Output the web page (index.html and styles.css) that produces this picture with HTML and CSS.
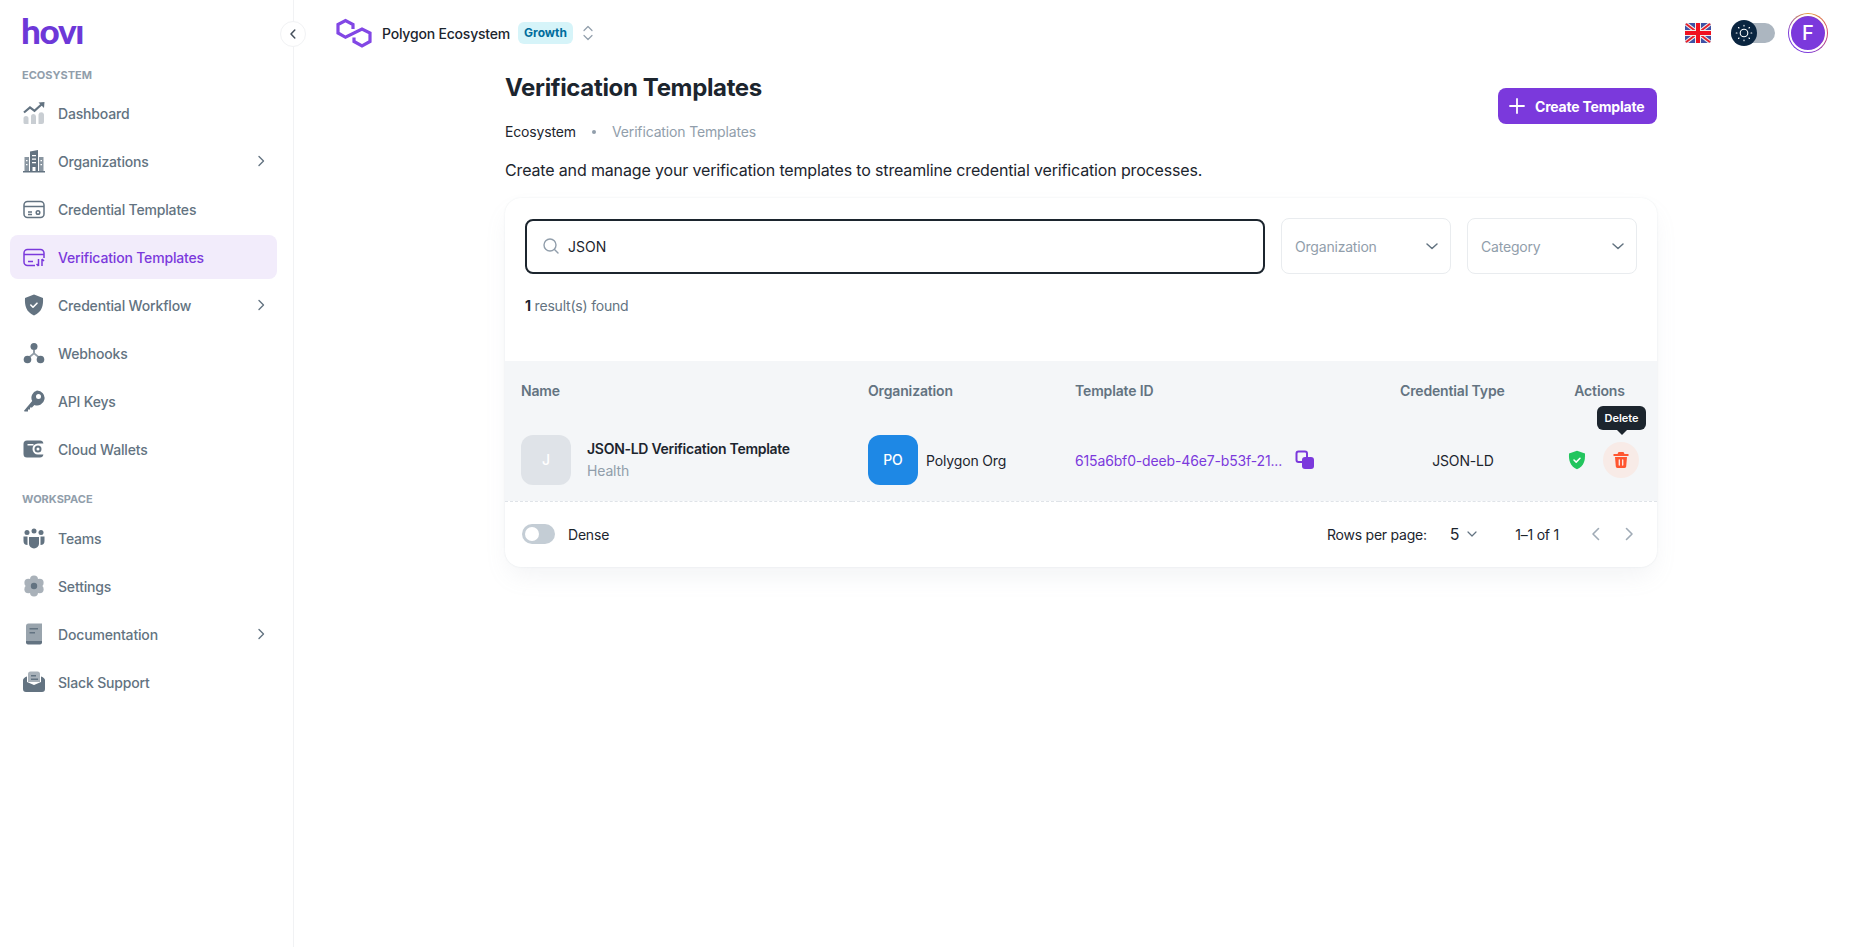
FILE: index.html
```html
<!doctype html>
<html lang="en">
  <head>
    <meta charset="UTF-8" />
    <meta name="viewport" content="width=device-width, initial-scale=1.0" />
    <title>Verification Templates</title>
    <link rel="stylesheet" href="styles.css">
  </head>
  <body>
    <aside class="sidebar">
      <div class="logo">hovı</div>
      <button class="collapse">
        <svg width="14" height="14" viewBox="0 0 14 14"><path d="M8.8 3 5 7l3.8 4" fill="none" stroke="#454f5b" stroke-width="1.5" stroke-linecap="round" stroke-linejoin="round"/></svg>
      </button>

      <div class="nav-title first">ECOSYSTEM</div>
      <nav class="nav">
        <a class="nav-item">
          <svg class="nav-icon" viewBox="0 0 24 24"><g fill="#637381"><path opacity=".35" d="M1.500 17.500a2.500 2.500 0 0 1 5 0V23H3a1.500 1.500 0 0 1-1.500-1.500zM9 15.500a2.500 2.500 0 0 1 5 0V23H9zM16.500 13.500a2.800 2.800 0 0 1 5.500 0V21a2 2 0 0 1-2 2h-3.500z"/><path d="m16.500 1.500 6-.5-.5 6z"/></g><path d="M2 11.500 8 6.300l4.500 3.500L20 3" fill="none" stroke="#637381" stroke-width="2.200"/></svg>
          <span class="nav-label">Dashboard</span>
        </a>
        <a class="nav-item">
          <svg class="nav-icon" viewBox="0 0 24 24"><g fill="#637381"><path d="M1 22h22v1.500H1z"/><path d="M8 2.500 16 1v21H8z"/><path d="M2.500 8H7v14H2.500zM17 8h4.500v14H17z" opacity=".75"/><path fill="#fff" d="M10 6h4v1.300h-4zM10 9.500h4v1.300h-4zM10 13h4v1.300h-4zM10.500 18h3v4h-3zM4 11h1.500v1.300H4zM4 15h1.500v1.300H4zM18.500 11H20v1.300h-1.500zM18.500 15H20v1.300h-1.500z"/></g></svg>
          <span class="nav-label">Organizations</span>
          <svg class="nav-arrow" viewBox="0 0 14 14"><path d="M5 2.500 9.500 7 5 11.500" /></svg>
        </a>
        <a class="nav-item">
          <svg class="nav-icon" viewBox="0 0 24 24"><g fill="none" stroke="#637381" stroke-width="1.500"><rect x="2" y="4.500" width="20" height="16" rx="3.500"/><path d="M2 9.500h20M6 15h4M6 17.500h4" /><circle cx="16" cy="15.500" r="1.800"/></g></svg>
          <span class="nav-label">Credential Templates</span>
        </a>
        <a class="nav-item active">
          <svg class="nav-icon" viewBox="0 0 24 24"><g fill="none" stroke="#7b39dc" stroke-width="1.500"><path d="M13 20.500H5.500A3.500 3.500 0 0 1 2 17V8a3.500 3.500 0 0 1 3.500-3.500h13A3.500 3.500 0 0 1 22 8v5"/><path d="M2 9.500h20M6 16.500h5M16.500 14v7M14.500 19l2 2M20 21v-7M22 16l-2-2"/></g></svg>
          <span class="nav-label">Verification Templates</span>
        </a>
        <a class="nav-item">
          <svg class="nav-icon" viewBox="0 0 24 24"><path fill="#637381" d="M12 1.500 21 5c.4 7.500-1 14-9 17.500C4 19 2.600 12.500 3 5z"/><path d="m8.800 12 2.200 2.200 4-4" fill="none" stroke="#fff" stroke-width="1.600" stroke-linecap="round" stroke-linejoin="round"/></svg>
          <span class="nav-label">Credential Workflow</span>
          <svg class="nav-arrow" viewBox="0 0 14 14"><path d="M5 2.500 9.500 7 5 11.500" /></svg>
        </a>
        <a class="nav-item">
          <svg class="nav-icon" viewBox="0 0 24 24"><g fill="#637381"><circle cx="12" cy="5.500" r="3.500"/><circle cx="5.500" cy="18.500" r="3.800"/><circle cx="18.500" cy="18.500" r="3.800"/><path d="M11 9h2v3l5 4-1 1.500-5-4-5 4L6 16l5-4z" opacity=".7"/></g></svg>
          <span class="nav-label">Webhooks</span>
        </a>
        <a class="nav-item">
          <svg class="nav-icon" viewBox="0 0 24 24"><path fill="#637381" fill-rule="evenodd" d="M15 1.500a7.500 7.500 0 1 1-2.600 14.500L10 18.400H8v2H6v2H2.500L2 21.800l8.200-9.700A7.500 7.500 0 0 1 15 1.500zm1.500 3.500a2.500 2.500 0 1 0 0 5 2.500 2.500 0 0 0 0-5z"/></svg>
          <span class="nav-label">API Keys</span>
        </a>
        <a class="nav-item">
          <svg class="nav-icon" viewBox="0 0 24 24"><path fill="#637381" fill-rule="evenodd" d="M5 3.500h13a3.500 3.500 0 0 1 3.400 3H16a5.500 5.500 0 0 0 0 11h5.400a3.500 3.500 0 0 1-3.400 3H5a3.500 3.500 0 0 1-3.500-3.500V7A3.500 3.500 0 0 1 5 3.500zM5.500 7v1.500h6V7zM16 8.500a3.500 3.500 0 1 1 0 7 3.500 3.500 0 0 1 0-7zm0 2a1.500 1.500 0 1 0 0 3 1.500 1.500 0 0 0 0-3z"/></svg>
          <span class="nav-label">Cloud Wallets</span>
        </a>
      </nav>

      <div class="nav-title workspace">WORKSPACE</div>
      <nav class="nav">
        <a class="nav-item">
          <svg class="nav-icon" viewBox="0 0 24 24"><g fill="#637381"><circle cx="5" cy="6.500" r="2.500"/><circle cx="12" cy="5" r="2.500"/><circle cx="19" cy="6.500" r="2.500"/><path d="M7 11h10v6.500a5 5 0 0 1-10 0z"/><path d="M1.500 10.500H5.500V19A4 4 0 0 1 1.500 15zM22.500 10.500H18.500V19a4 4 0 0 0 4-4z"/></g></svg>
          <span class="nav-label">Teams</span>
        </a>
        <a class="nav-item">
          <svg class="nav-icon" viewBox="0 0 24 24"><g fill="#637381" opacity=".55"><circle cx="12" cy="12" r="7.500"/><circle cx="12" cy="5.500" r="4"/><circle cx="12" cy="18.500" r="4"/><circle cx="6.400" cy="8.700" r="4"/><circle cx="17.600" cy="8.700" r="4"/><circle cx="6.400" cy="15.300" r="4"/><circle cx="17.600" cy="15.300" r="4"/></g><circle cx="12" cy="12" r="3.200" fill="#637381"/></svg>
          <span class="nav-label">Settings</span>
        </a>
        <a class="nav-item">
          <svg class="nav-icon" viewBox="0 0 24 24"><g fill="#637381"><path opacity=".65" d="M4 4a2.500 2.500 0 0 1 2.500-2.500H20V19H4z"/><path d="M4 19h16v1.500a2 2 0 0 1-2 2H6a2 2 0 0 1-2-2z"/><path d="M7.500 6H16v1.600H7.500zM7.500 10H13v1.600H7.500z"/></g></svg>
          <span class="nav-label">Documentation</span>
          <svg class="nav-arrow" viewBox="0 0 14 14"><path d="M5 2.500 9.500 7 5 11.500" /></svg>
        </a>
        <a class="nav-item">
          <svg class="nav-icon" viewBox="0 0 24 24"><g fill="#637381"><path opacity=".55" d="M6 4a2.500 2.500 0 0 1 2.500-2.500h7A2.500 2.500 0 0 1 18 4v8H6z"/><path d="M1 10c0-1.500 2-3 4-3.500V12l7 3 7-3V6.500c2 .5 4 2 4 3.500v9a3 3 0 0 1-3 3H4a3 3 0 0 1-3-3z"/><path d="M9 5h5v1.500H9zM9 8.500h7V10H9z"/></g></svg>
          <span class="nav-label">Slack Support</span>
        </a>
      </nav>
    </aside>

    <div class="page">
      <header class="topbar">
        <div class="workspace-switch">
          <svg class="polygon" width="40" height="32" viewBox="5 7 40 32"><path d="M23 19v-4.500l-7.500-4-7.500 4V23l7.500 4.300L32 19l8 4v8.500L32 36l-8-4.500v-4" fill="none" stroke="#8247e5" stroke-width="3.200"/></svg>
          <span class="workspace-name">Polygon Ecosystem</span>
          <span class="plan">Growth</span>
          <svg width="14" height="18" viewBox="0 0 14 18"><path d="M3 6.500 7 2.500l4 4M3 11.500l4 4 4-4" fill="none" stroke="#919eab" stroke-width="1.200" stroke-linecap="round" stroke-linejoin="round"/></svg>
        </div>
        <div class="topbar-right">
          <svg class="flag" width="26" height="20" viewBox="0 0 26 20">
            <rect width="26" height="20" fill="#3f51a5"/>
            <path d="M0 0 26 20M26 0 0 20" stroke="#eee" stroke-width="4"/>
            <path d="M0 0 26 20M26 0 0 20" stroke="#e8202c" stroke-width="1.800"/>
            <path d="M10 0h6v20h-6zM0 7h26v6H0z" fill="#eee"/>
            <path d="M11 0h4v20h-4zM0 8h26v4H0z" fill="#f01020"/>
          </svg>
          <div class="theme-toggle">
            <span class="theme-knob">
              <svg width="18" height="18" viewBox="0 0 18 18"><g fill="none" stroke="#fff" stroke-width="1.100" stroke-linecap="round"><circle cx="9" cy="9" r="3.800"/><path d="M9 1.200v.8M9 16v.8M1.200 9H2M16 9h.8M3.500 3.500l.5.5M14 14l.5.5M3.500 14.500 4 14M14 4l.5-.5"/></g></svg>
            </span>
          </div>
          <div class="avatar-ring"><div class="avatar">F</div></div>
        </div>
      </header>

      <main class="content">
        <div class="page-head">
          <div>
            <h1>Verification Templates</h1>
            <div class="breadcrumb">
              <span>Ecosystem</span>
              <i class="dot"></i>
              <span class="muted">Verification Templates</span>
            </div>
          </div>
          <button class="btn-create">
            <svg width="20" height="20" viewBox="0 0 20 20"><path d="M10 3v14M3 10h14" stroke="#fff" stroke-width="1.800" stroke-linecap="round"/></svg>
            Create Template
          </button>
        </div>
        <p class="intro">Create and manage your verification templates to streamline credential verification processes.</p>

        <section class="card">
          <div class="filters">
            <div class="search">
              <svg width="20" height="20" viewBox="0 0 20 20"><circle cx="9" cy="9" r="6" fill="none" stroke="#919eab" stroke-width="1.400"/><path d="m13.500 13.500 3.500 3.500" stroke="#919eab" stroke-width="1.400" stroke-linecap="round"/></svg>
              <span>JSON</span>
            </div>
            <div class="select">
              <span>Organization</span>
              <svg width="16" height="16" viewBox="0 0 16 16"><path d="m3 6 5 4.500L13 6" fill="none" stroke="#637381" stroke-width="1.500" stroke-linecap="round" stroke-linejoin="round"/></svg>
            </div>
            <div class="select">
              <span>Category</span>
              <svg width="16" height="16" viewBox="0 0 16 16"><path d="m3 6 5 4.500L13 6" fill="none" stroke="#637381" stroke-width="1.500" stroke-linecap="round" stroke-linejoin="round"/></svg>
            </div>
          </div>
          <div class="results"><b>1</b> result(s) found</div>

          <table class="table">
            <colgroup>
              <col class="col-name"><col class="col-org"><col class="col-id"><col class="col-type"><col>
            </colgroup>
            <thead>
              <tr>
                <th>Name</th>
                <th>Organization</th>
                <th>Template ID</th>
                <th class="center">Credential Type</th>
                <th class="center th-actions">Actions</th>
              </tr>
            </thead>
            <tbody>
              <tr>
                <td>
                  <div class="cell-name">
                    <div class="thumb thumb-grey">J</div>
                    <div>
                      <div class="tpl-name">JSON-LD Verification Template</div>
                      <div class="tpl-cat">Health</div>
                    </div>
                  </div>
                </td>
                <td>
                  <div class="cell-org">
                    <div class="thumb thumb-blue">PO</div>
                    <span>Polygon Org</span>
                  </div>
                </td>
                <td>
                  <div class="cell-id">
                    <span class="tpl-id">615a6bf0-deeb-46e7-b53f-21...</span>
                    <svg width="20" height="20" viewBox="0 0 20 20"><rect x="1.500" y="1.500" width="10.500" height="10.500" rx="2" fill="none" stroke="#7b39dc" stroke-width="2"/><rect x="7" y="7" width="12" height="12" rx="3" fill="#7b39dc"/></svg>
                  </div>
                </td>
                <td class="center td-type">JSON-LD</td>
                <td class="td-actions">
                  <div class="actions">
                    <svg width="18" height="20" viewBox="0 0 18 20"><path fill="#22c55e" d="M9 .8 17 3.500c.3 7-.9 12.500-8 15.800C1.900 16 .7 10.500 1 3.500z"/><path d="m6 10 2.200 2.100L12 8.300" fill="none" stroke="#fff" stroke-width="1.500" stroke-linecap="round" stroke-linejoin="round"/></svg>
                    <span class="delete">
                      <svg width="18" height="18" viewBox="0 0 18 18"><path fill="#ff5630" d="M6.500 1h5l1 2h4v2h-15V3h4zM3 6h12l-.8 9.500A2 2 0 0 1 12.200 17H5.800a2 2 0 0 1-2-1.500z"/><path d="M7.300 9v5M10.700 9v5" stroke="#fbeeeb" stroke-width="1.300" stroke-linecap="round"/></svg>
                      <span class="tooltip">Delete</span>
                    </span>
                  </div>
                </td>
              </tr>
            </tbody>
          </table>

          <div class="table-foot">
            <div class="dense">
              <span class="switch"><i></i></span>
              <span>Dense</span>
            </div>
            <div class="pager">
              <span>Rows per page:</span>
              <span class="rows">5
                <svg width="14" height="14" viewBox="0 0 14 14"><path d="m3 5 4 4 4-4" fill="none" stroke="#637381" stroke-width="1.200" stroke-linecap="round" stroke-linejoin="round"/></svg>
              </span>
              <span class="range">1–1 of 1</span>
              <svg class="page-arrow" width="16" height="16" viewBox="0 0 16 16"><path d="M10.500 2.500 5 8l5.500 5.500"/></svg>
              <svg class="page-arrow" width="16" height="16" viewBox="0 0 16 16"><path d="M5.500 2.500 11 8l-5.500 5.500"/></svg>
            </div>
          </div>
        </section>
      </main>
    </div>
  </body>
</html>
```

FILE: styles.css
```css
* {
  box-sizing: border-box;
  margin: 0;
  padding: 0;
}

html,
body {
  height: 100%;
}

body {
  display: flex;
  font-family: Inter, "Liberation Sans", sans-serif;
  font-size: 14px;
  color: #1c252e;
  background-color: #fff;
  overflow: hidden;
}

/* sidebar */
.sidebar {
  position: relative;
  flex: 0 0 294px;
  height: 100%;
  padding: 0 16px 0 10px;
  border-right: 1px solid #f1f2f4;
}

.logo {
  height: 62px;
  padding: 10px 0 0 11px;
  font-family: Lato, sans-serif;
  font-size: 35px;
  font-weight: 900;
  line-height: 40px;
  letter-spacing: -1.3px;
  color: #6d38d8;
}

.collapse {
  position: absolute;
  top: 21px;
  right: -13px;
  display: flex;
  align-items: center;
  justify-content: center;
  width: 26px;
  height: 26px;
  border: 1px solid #f1f2f4;
  border-radius: 50%;
  background-color: #fff;
}

.nav-title {
  height: 26px;
  padding-left: 12px;
  font-size: 11px;
  font-weight: 700;
  line-height: 26px;
  color: #919eab;
}

.first {
  margin-bottom: 3px;
}

.workspace {
  margin-top: 15px;
  margin-bottom: 4px;
}

.nav {
  display: flex;
  flex-direction: column;
  gap: 4px;
}

.nav-item {
  display: flex;
  align-items: center;
  height: 44px;
  padding: 0 9px 0 12px;
  border-radius: 8px;
  font-size: 14px;
  font-weight: 500;
  letter-spacing: -0.17px;
  color: #637381;
}

.nav-item.active {
  background-color: #f2ecfb;
  color: #7b39dc;
}

.nav-icon {
  flex: none;
  width: 24px;
  height: 24px;
  margin-right: 12px;
}

.nav-label {
  flex: 1;
}

.nav-arrow {
  flex: none;
  width: 14px;
  height: 14px;
  fill: none;
  stroke: #637381;
  stroke-width: 1.400;
  stroke-linecap: round;
  stroke-linejoin: round;
}

/* topbar */
.page {
  flex: 1;
  min-width: 0;
}

.topbar {
  display: flex;
  align-items: center;
  justify-content: space-between;
  height: 66px;
  padding: 0 38px 0 41px;
}

.workspace-switch {
  display: flex;
  align-items: center;
}

.polygon {
  margin-right: 7px;
}

.workspace-name {
  font-weight: 500;
  letter-spacing: -0.2px;
  margin-right: 8px;
}

.plan {
  height: 22px;
  padding: 0 6px;
  margin-right: 8px;
  border-radius: 6px;
  background-color: #d6f4f9;
  color: #006c9c;
  font-size: 12px;
  font-weight: 700;
  line-height: 22px;
}

.topbar-right {
  display: flex;
  align-items: center;
}

.flag {
  margin-right: 20px;
  border-radius: 3px;
}

.theme-toggle {
  position: relative;
  width: 44px;
  height: 20px;
  margin-right: 13px;
  border-radius: 10px;
  background-color: #acb6c0;
}

.theme-knob {
  position: absolute;
  top: -3px;
  left: 0;
  display: flex;
  align-items: center;
  justify-content: center;
  width: 26px;
  height: 26px;
  border-radius: 50%;
  background-color: #0a2540;
}

.avatar-ring {
  display: flex;
  align-items: center;
  justify-content: center;
  width: 40px;
  height: 40px;
  border-radius: 50%;
  background: conic-gradient(#e8a13a, #d0476a, #7b39dc, #7b39dc, #e8a13a);
}

.avatar {
  width: 34px;
  height: 34px;
  border-radius: 50%;
  outline: 2px solid #fff;
  background-color: #7b39dc;
  color: #fff;
  font-size: 20px;
  font-weight: 500;
  line-height: 34px;
  text-align: center;
}

/* content */
.content {
  width: 1152px;
  margin-left: 211px;
}

.page-head {
  display: flex;
  align-items: flex-end;
  justify-content: space-between;
}

h1 {
  font-size: 24px;
  font-weight: 700;
  line-height: 44px;
  letter-spacing: -0.35px;
}

.breadcrumb {
  display: flex;
  align-items: center;
  height: 43px;
  letter-spacing: -0.15px;
}

.muted {
  color: #919eab;
}

.dot {
  width: 4px;
  height: 4px;
  margin: 0 16px;
  border-radius: 50%;
  background-color: #919eab;
}

.btn-create {
  display: flex;
  align-items: center;
  gap: 8px;
  width: 159px;
  height: 36px;
  margin-bottom: 29px;
  padding-left: 9px;
  border: 0;
  border-radius: 8px;
  background-color: #7b39dc;
  color: #fff;
  font-family: inherit;
  font-size: 14px;
  font-weight: 700;
  letter-spacing: -0.2px;
}

.intro {
  margin-top: 5px;
  font-size: 16px;
  line-height: 24px;
  letter-spacing: -0.15px;
}

.card {
  margin-top: 16px;
  border-radius: 16px;
  background-color: #fff;
  box-shadow: 0 0 2px rgba(145, 158, 171, 0.2), 0 12px 24px -4px rgba(145, 158, 171, 0.12);
}

.filters {
  display: flex;
  align-items: center;
  gap: 16px;
  padding: 20px 20px 0;
}

.search {
  display: flex;
  flex: 1;
  align-items: center;
  gap: 7px;
  height: 55px;
  padding: 0 14px;
  border: 2px solid #1c252e;
  border-radius: 8px;
  font-size: 14px;
}

.select {
  display: flex;
  align-items: center;
  justify-content: space-between;
  width: 170px;
  height: 56px;
  padding: 0 10px 0 13px;
  border: 1px solid #e9ecef;
  border-radius: 8px;
  color: #919eab;
  letter-spacing: -0.2px;
}

.results {
  height: 87px;
  padding: 22px 20px 0;
  font-size: 14px;
  line-height: 20px;
  letter-spacing: -0.2px;
  color: #637381;
}

.results b {
  color: #1c252e;
}

.table {
  width: 100%;
  border-collapse: collapse;
  table-layout: fixed;
}

.col-name {
  width: 347px;
}

.col-org {
  width: 207px;
}

.col-id {
  width: 325px;
}

.col-type {
  width: 136px;
}

th {
  height: 59px;
  padding: 0 16px;
  background-color: #f4f6f8;
  color: #637381;
  font-weight: 600;
  letter-spacing: -0.15px;
  text-align: left;
  white-space: nowrap;
}

td {
  height: 81px;
  padding: 0 16px;
  background-color: #f4f6f8;
  border-bottom: 1px dashed #dfe3e8;
  letter-spacing: -0.15px;
}

.table .center {
  text-align: center;
}

.table .th-actions {
  padding-left: 38px;
}

.table .td-type {
  padding-left: 38px;
  white-space: nowrap;
}

.td-actions {
  padding-left: 46px;
}

.cell-name,
.cell-org,
.cell-id {
  display: flex;
  align-items: center;
}

.thumb {
  flex: none;
  width: 50px;
  height: 50px;
  border-radius: 12px;
  color: #fff;
  line-height: 50px;
  text-align: center;
  font-weight: 500;
  margin-right: 8px;
}

.cell-name .thumb {
  margin-right: 16px;
}

.thumb-grey {
  background-color: #dfe3e8;
}

.thumb-blue {
  background-color: #1e88e5;
}

.tpl-name {
  font-weight: 600;
  line-height: 22px;
  letter-spacing: -0.28px;
}

.tpl-cat {
  color: #919eab;
  line-height: 22px;
}

.tpl-id {
  width: 220px;
  color: #7b39dc;
}

.actions {
  display: flex;
  align-items: center;
  justify-content: center;
  gap: 17px;
}

.delete {
  position: relative;
  display: flex;
  align-items: center;
  justify-content: center;
  width: 36px;
  height: 36px;
  border-radius: 50%;
  background-color: #f8ebe7;
}

.tooltip {
  position: absolute;
  top: -36px;
  left: -6px;
  width: 49px;
  height: 24px;
  border-radius: 6px;
  background-color: #1c252e;
  color: #fff;
  font-size: 11px;
  font-weight: 600;
  letter-spacing: 0;
  line-height: 24px;
  text-align: center;
}

.tooltip::after {
  content: "";
  position: absolute;
  left: 20px;
  bottom: -5px;
  border: 5px solid transparent;
  border-bottom: 0;
  border-top-color: #1c252e;
}

.table-foot {
  display: flex;
  align-items: center;
  justify-content: space-between;
  height: 65px;
  padding: 0 20px 0 17px;
}

.dense {
  display: flex;
  align-items: center;
  gap: 13px;
  letter-spacing: -0.2px;
}

.switch {
  display: block;
  width: 33px;
  height: 20px;
  padding: 3px;
  border-radius: 10px;
  background-color: #c4cdd5;
}

.switch i {
  display: block;
  width: 14px;
  height: 14px;
  border-radius: 50%;
  background-color: #fff;
}

.pager {
  display: flex;
  align-items: center;
  letter-spacing: -0.23px;
}

.rows {
  display: flex;
  align-items: center;
  gap: 6px;
  margin: 0 36px 0 23px;
  font-size: 16px;
}

.range {
  margin-right: 29px;
}

.page-arrow {
  fill: none;
  stroke: #a0abb6;
  stroke-width: 1.600;
  stroke-linecap: round;
  stroke-linejoin: round;
  margin-left: 17px;
}

.page-arrow:first-of-type {
  margin-left: 0;
}
```
